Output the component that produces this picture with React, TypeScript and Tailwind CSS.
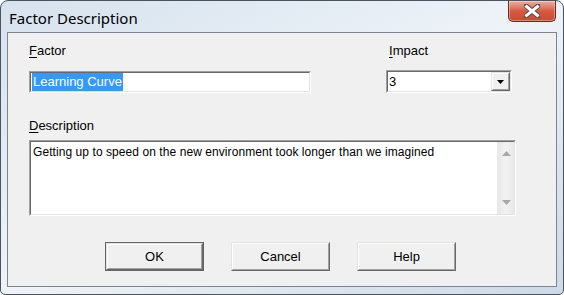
import React from 'react';

const ui = { fontFamily: '"Liberation Sans", Arial, sans-serif' };

const Sunken = ({ className, children }: { className: string; children: React.ReactNode }) => (
  <div className={`border border-t-[#a0a0a0] border-l-[#a0a0a0] border-b-white border-r-white ${className}`}>
    <div className="h-full border border-t-[#696969] border-l-[#696969] border-b-[#e3e3e3] border-r-[#e3e3e3] bg-white">
      {children}
    </div>
  </div>
);

const PushButton = ({ label, isDefault }: { label: string; isDefault?: boolean }) => {
  const body = (
    <div className="h-full border border-t-[#e3e3e3] border-l-[#e3e3e3] border-b-[#696969] border-r-[#696969]">
      <div className="h-full border border-t-white border-l-white border-b-[#a0a0a0] border-r-[#a0a0a0] bg-[#f0f0f0] flex items-center justify-center text-[13px] text-black">
        {label}
      </div>
    </div>
  );
  return (
    <div className={`w-[99px] h-[29px] ${isDefault ? 'border border-[#646464]' : ''}`}>{body}</div>
  );
};

const Label = ({ accel, rest }: { accel: string; rest: string }) => (
  <div className="text-[13px] leading-[15px] text-black">
    <span className="underline underline-offset-2">{accel}</span>
    {rest}
  </div>
);

const CloseButton = () => (
  <div className="w-[48px] h-[21px] rounded-b-[5px] border border-t-0 border-[#6b2a20] bg-gradient-to-b from-[#eab0a2] via-[#d65a41] to-[#c94a2f] flex items-center justify-center shadow-[inset_0_0_0_1px_rgba(255,255,255,0.35)]">
    <svg width="16" height="14" viewBox="0 0 16 14">
      <path d="M2 2 L14 12 M14 2 L2 12" stroke="#5b4a4a" strokeWidth="5" strokeLinecap="square" />
      <path d="M2.5 2.5 L13.5 11.5 M13.5 2.5 L2.5 11.5" stroke="#ffffff" strokeWidth="3" strokeLinecap="square" />
    </svg>
  </div>
);

const ScrollArrow = ({ up }: { up?: boolean }) => (
  <svg width="9" height="5" viewBox="0 0 9 5">
    <path d={up ? 'M0 5 L4.5 0 L9 5 Z' : 'M0 0 L9 0 L4.5 5 Z'} fill="#a8a8a8" />
  </svg>
);

export default function App() {
  return (
    <div
      className="w-[564px] h-[295px] rounded-t-[8px] rounded-b-[5px] border border-[#4b545e] bg-gradient-to-br from-[#d6e2ee] via-[#eef3f8] to-[#cdd9e6] flex flex-col overflow-hidden"
      style={ui}
    >
      <div className="h-[31px] flex items-start justify-between pl-[8px] pr-[7px] shrink-0">
        <div
          className="pt-[7px] text-[15px] leading-[20px] text-black"
          style={{ fontFamily: '"Noto Sans", "Open Sans", sans-serif' }}
        >
          Factor Description
        </div>
        <CloseButton />
      </div>

      <div className="mx-[6px] mb-[7px] flex-1 border border-[#7a8591] bg-[#f0f0f0] flex flex-col pl-[21px] pt-[10px]">
        <div className="flex">
          <div className="w-[282px] flex flex-col">
            <Label accel="F" rest="actor" />
            <Sunken className="mt-[13px] h-[22px]">
              <div className="h-full flex items-center pl-[1px]">
                <span className="bg-[#3399ff] text-white text-[13px] leading-[18px] px-[1px]">Learning Curve</span>
              </div>
            </Sunken>
          </div>
          <div className="ml-[75px] w-[126px] flex flex-col">
            <div className="pl-[3px]">
              <Label accel="I" rest="mpact" />
            </div>
            <Sunken className="mt-[12px] h-[23px]">
              <div className="h-full flex items-center justify-between">
                <span className="pl-[1px] text-[13px] text-black">3</span>
                <div className="w-[19px] h-full border border-t-[#e3e3e3] border-l-[#e3e3e3] border-b-[#696969] border-r-[#696969]">
                  <div className="h-full border border-t-white border-l-white border-b-[#a0a0a0] border-r-[#a0a0a0] bg-[#f0f0f0] flex items-center justify-center">
                    <svg width="7" height="4" viewBox="0 0 7 4">
                      <path d="M0 0 L7 0 L3.5 4 Z" fill="#000" />
                    </svg>
                  </div>
                </div>
              </div>
            </Sunken>
          </div>
        </div>

        <div className="mt-[25px]">
          <Label accel="D" rest="escription" />
        </div>
        <Sunken className="mt-[7px] w-[487px] h-[76px]">
          <div className="h-full flex">
            <div className="flex-1 pl-[2px] pt-[3px] text-[12px] tracking-[0.07px] leading-[15px] text-black">
              Getting up to speed on the new environment took longer than we imagined
            </div>
            <div className="w-[17px] h-full bg-gradient-to-r from-[#e8e8e8] via-[#f2f2f2] to-[#e8e8e8] border-l border-[#e6e6e6] flex flex-col items-center justify-between py-[9px]">
              <ScrollArrow up />
              <ScrollArrow />
            </div>
          </div>
        </Sunken>

        <div className="mt-[26px] ml-[76px] flex gap-[27px]">
          <PushButton label="OK" isDefault />
          <PushButton label="Cancel" />
          <PushButton label="Help" />
        </div>
      </div>
    </div>
  );
}
